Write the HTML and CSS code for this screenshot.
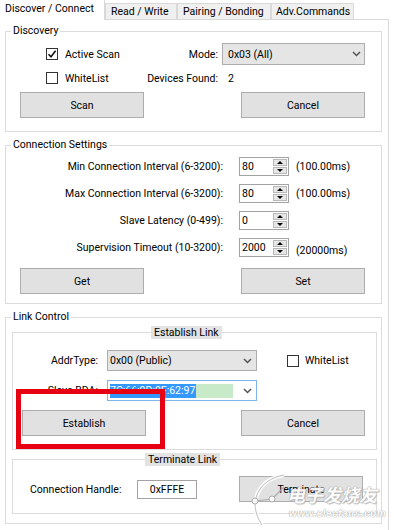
FILE: index.html
```html
<!DOCTYPE html>
<html>
<head>
<meta charset="utf-8">
<link rel="stylesheet" href="styles.css">
</head>
<body>
<div class="screen">
  <div class="tabs">
    <div class="tab tab-active">Discover / Connect</div>
    <div class="tab tab-rw">Read / Write</div>
    <div class="tab tab-pb">Pairing / Bonding</div>
    <div class="tab tab-adv">Adv.Commands</div>
  </div>
  <div class="page">
    <fieldset class="group">
      <legend class="group-title">Discovery</legend>
      <div class="disc-body">
        <div class="disc-grid">
          <div class="check check-disc"><span class="box"><svg width="10" height="10" viewBox="0 0 10 10"><path d="M1.5 5.2 L4 7.8 L8.6 1.8" fill="none" stroke="#111" stroke-width="1.6"/></svg></span><span>Active Scan</span></div>
          <div class="lbl-right">Mode:</div>
          <div class="combo combo-disc"><span>0x03 (All)</span><svg class="chev" width="9" height="6" viewBox="0 0 9 6"><path d="M1 1 L4.5 4.5 L8 1" fill="none" stroke="#555" stroke-width="1.5"/></svg></div>
          <div class="check check-disc"><span class="box"></span><span>WhiteList</span></div>
          <div class="lbl-right">Devices Found:</div>
          <div class="val">2</div>
        </div>
        <div class="btn-row">
          <button class="btn">Scan</button>
          <button class="btn">Cancel</button>
        </div>
      </div>
    </fieldset>

    <fieldset class="group group-gap">
      <legend class="group-title">Connection Settings</legend>
      <div class="conn-body">
        <div class="conn-grid">
          <div class="conn-lbl">Min Connection Interval (6-3200):</div>
          <div class="spin"><span class="spin-val">80</span><span class="spin-btns"><span class="spin-btn"><i class="tri-up"></i></span><span class="spin-btn"><i class="tri-down"></i></span></span></div>
          <div class="conn-note">(100.00ms)</div>

          <div class="conn-lbl">Max Connection Interval (6-3200):</div>
          <div class="spin"><span class="spin-val">80</span><span class="spin-btns"><span class="spin-btn"><i class="tri-up"></i></span><span class="spin-btn"><i class="tri-down"></i></span></span></div>
          <div class="conn-note">(100.00ms)</div>

          <div class="conn-lbl">Slave Latency (0-499):</div>
          <div class="spin"><span class="spin-val">0</span><span class="spin-btns"><span class="spin-btn"><i class="tri-up"></i></span><span class="spin-btn"><i class="tri-down"></i></span></span></div>
          <div class="conn-note"></div>

          <div class="conn-lbl">Supervision Timeout (10-3200):</div>
          <div class="spin"><span class="spin-val">2000</span><span class="spin-btns"><span class="spin-btn"><i class="tri-up"></i></span><span class="spin-btn"><i class="tri-down"></i></span></span></div>
          <div class="conn-note conn-note-low">(20000ms)</div>
        </div>
        <div class="btn-row btn-row-conn">
          <button class="btn">Get</button>
          <button class="btn">Set</button>
        </div>
      </div>
    </fieldset>

    <fieldset class="group group-gap">
      <legend class="group-title">Link Control</legend>
      <div class="link-body">
        <fieldset class="sub sub-est">
          <legend class="sub-title sub-title-est">Establish Link</legend>
          <div class="est-body">
            <div class="est-grid">
              <div class="lbl-right">AddrType:</div>
              <div class="combo combo-link"><span>0x00 (Public)</span><svg class="chev" width="9" height="6" viewBox="0 0 9 6"><path d="M1 1 L4.5 4.5 L8 1" fill="none" stroke="#555" stroke-width="1.5"/></svg></div>
              <div class="check check-link"><span class="box"></span><span>WhiteList</span></div>

              <div class="lbl-right">Slave BDA:</div>
              <div class="combo combo-edit"><span class="sel">7C:66:9D:9F:62:97</span><span class="green"></span><svg class="chev" width="9" height="6" viewBox="0 0 9 6"><path d="M1 1 L4.5 4.5 L8 1" fill="none" stroke="#555" stroke-width="1.5"/></svg></div>
              <div></div>
            </div>
            <div class="btn-row btn-row-est">
              <button class="btn">Establish</button>
              <button class="btn">Cancel</button>
            </div>
          </div>
        </fieldset>
        <fieldset class="sub sub-term">
          <legend class="sub-title sub-title-term">Terminate Link</legend>
          <div class="term-body">
            <div class="term-lbl">Connection Handle:</div>
            <div class="handle">0xFFFE</div>
            <button class="btn btn-term">Terminate</button>
          </div>
        </fieldset>
      </div>
    </fieldset>
  </div>

  <div class="annot"></div>

  <div class="watermark">
    <svg class="wm-logo" width="50" height="56" viewBox="0 0 50 56">
      <path d="M40 2 C16 6 2 28 18 52" fill="none" stroke="#fff" stroke-width="4"/>
      <path d="M40 2 C16 6 2 28 18 52" fill="none" stroke="#a8a8a8" stroke-width="0.8"/>
      <line x1="11" y1="28" x2="28" y2="26" stroke="#a8a8a8" stroke-width="1.2"/>
      <circle cx="11" cy="28" r="3" fill="#fff" stroke="#a8a8a8" stroke-width="1"/>
      <circle cx="28" cy="26" r="3" fill="#fff" stroke="#a8a8a8" stroke-width="1"/>
      <line x1="30" y1="24" x2="40" y2="14" stroke="#a8a8a8" stroke-width="1.2"/>
    </svg>
    <div class="wm-text">
      <div class="wm-cn">电子发烧友</div>
      <div class="wm-url">www.elecfans.com</div>
    </div>
  </div>
</div>
</body>
</html>
```

FILE: styles.css
```css
* { box-sizing: border-box; }

html, body {
  margin: 0;
  padding: 0;
  background: #ffffff;
}

body {
  font-family: Roboto, "Liberation Sans", Arial, sans-serif;
  font-size: 10.5px;
  color: #000;
}

.screen {
  position: relative;
  width: 394px;
  height: 530px;
  overflow: hidden;
  background: #fff;
}

/* ---------- tabs ---------- */
.tabs {
  display: flex;
  align-items: flex-end;
  height: 19px;
}

.tab {
  height: 16px;
  line-height: 15px;
  padding-left: 5px;
  background: #f0f0f0;
  border: 1px solid #d9d9d9;
  border-bottom: none;
  white-space: nowrap;
  overflow: hidden;
}

.tab-active {
  position: relative;
  z-index: 2;
  width: 105px;
  height: 20px;
  margin-bottom: -1px;
  line-height: 17px;
  background: #fff;
  border-top: none;
  border-left: none;
  border-right: 1px solid #d9d9d9;
}

.tab-rw { width: 72px; }
.tab-pb { width: 94px; }
.tab-adv { width: 83px; padding-left: 4px; }

/* ---------- page ---------- */
.page {
  width: 389px;
  height: 511px;
  border-top: 1px solid #d9d9d9;
  border-right: 1px solid #d9d9d9;
  padding: 4px 6px 0 5px;
  background: #fff;
}

.group {
  margin: 0;
  padding: 0;
  min-width: 0;
  border: 1px solid #dcdcdc;
}

.group-gap { margin-top: 6px; }

.group-title {
  margin-left: 5px;
  padding: 0 2px;
  line-height: 14px;
  height: 14px;
}

/* ---------- common controls ---------- */
.btn-row {
  display: flex;
  justify-content: space-between;
}

.btn {
  width: 124px;
  height: 26px;
  padding: 0;
  margin: 0;
  font-family: inherit;
  font-size: 10.5px;
  color: #000;
  background: #e1e1e1;
  border: 1px solid #adadad;
  border-radius: 0;
}

.check {
  display: flex;
  align-items: center;
  gap: 7px;
}

.box {
  width: 12px;
  height: 12px;
  border: 1px solid #333;
  background: #fff;
  display: flex;
  align-items: center;
  justify-content: center;
  flex: none;
}

.lbl-right {
  text-align: right;
  white-space: nowrap;
}

.combo {
  display: flex;
  align-items: center;
  white-space: nowrap;
}

.chev { margin-left: auto; flex: none; }

/* ---------- discovery ---------- */
.disc-body {
  padding: 5px 16px 13px 14px;
}

.disc-grid {
  display: grid;
  grid-template-columns: 124px 78px 143px;
  grid-template-rows: 22px 12px;
  row-gap: 7px;
  align-items: center;
  margin-bottom: 8px;
}

.check-disc { padding-left: 26px; }

.disc-grid .lbl-right { padding-right: 4px; }

.combo-disc {
  height: 22px;
  padding: 0 3px 0 5px;
  background: #e5e5e5;
  border: 1px solid #adadad;
}

.val { padding-left: 6px; }

/* ---------- connection settings ---------- */
.conn-body {
  padding: 5px 16px 9px 14px;
}

.conn-grid {
  display: grid;
  grid-template-columns: 212px 50px auto;
  grid-auto-rows: 19px;
  column-gap: 7px;
  row-gap: 8px;
  align-items: center;
  margin-bottom: 11px;
}

.conn-lbl {
  text-align: right;
  padding-right: 9px;
  white-space: nowrap;
}

.conn-note { white-space: nowrap; }
.conn-note-low { padding-top: 5px; }

.spin {
  display: flex;
  height: 19px;
  border: 1px solid #a3a3a3;
  background: #fff;
}

.spin-val {
  flex: 1;
  line-height: 17px;
  padding-left: 2px;
}

.spin-btns {
  width: 16px;
  display: flex;
  flex-direction: column;
  gap: 1px;
  padding: 1px;
}

.spin-btn {
  flex: 1;
  display: flex;
  align-items: center;
  justify-content: center;
  background: #e6e6e6;
  border: 1px solid #b8b8b8;
}

.tri-up, .tri-down {
  width: 0;
  height: 0;
  border-left: 3px solid transparent;
  border-right: 3px solid transparent;
}

.tri-up { border-bottom: 3px solid #000; }
.tri-down { border-top: 3px solid #000; }

/* ---------- link control ---------- */
.link-body {
  padding: 2px 4px 9px 6px;
}

.sub {
  margin: 0;
  padding: 0;
  min-width: 0;
  border: 1px solid #dcdcdc;
}

.sub-term { margin-top: 3px; }

.sub-title {
  padding: 0 3px;
  line-height: 13px;
  height: 13px;
  background: #e3e3e3;
}

.sub-title-est { margin-left: 138px; }
.sub-title-term { margin-left: 132px; }

.est-body {
  padding: 11px 11px 13px 0;
}

.est-grid {
  display: grid;
  grid-template-columns: 85px 150px auto;
  grid-template-rows: 21px 21px;
  column-gap: 9px;
  row-gap: 9px;
  align-items: center;
  margin-bottom: 9px;
}

.combo-link {
  height: 21px;
  padding: 0 4px 0 2px;
  background: #e5e5e5;
  border: 1px solid #adadad;
}

.combo-edit {
  height: 21px;
  padding: 0 4px 0 2px;
  background: #fff;
  border: 1px solid #7eb4ea;
}

.sel {
  background: #3399ff;
  color: #fff;
  line-height: 14px;
  padding: 0 1px 0 0;
}

.green {
  width: 37px;
  height: 14px;
  background: #c9eac9;
}

.check-link { padding-left: 21px; gap: 6px; }

.btn-row-est { padding-left: 9px; }

.term-body {
  display: flex;
  align-items: center;
  padding: 10px 13px 11px 17px;
}

.term-lbl {
  width: 107px;
  white-space: nowrap;
}

.handle {
  width: 60px;
  height: 19px;
  line-height: 17px;
  text-align: center;
  border: 1px solid #a3a3a3;
  background: #fff;
}

.btn-term { margin-left: auto; }

/* ---------- overlays ---------- */
.annot {
  position: absolute;
  left: 16px;
  top: 389px;
  width: 149px;
  height: 60px;
  border: 5px solid #e60012;
}

.watermark {
  position: absolute;
  left: 244px;
  top: 473px;
  display: flex;
  align-items: flex-start;
  pointer-events: none;
  opacity: 0.9;
}

.wm-logo { flex: none; }

.wm-text {
  margin-left: -7px;
  padding-top: 10px;
}

.wm-cn {
  font-family: "Noto Sans CJK SC", sans-serif;
  font-size: 18px;
  line-height: 22px;
  font-style: italic;
  font-weight: bold;
  color: #fff;
  text-shadow: 0 0 1px #9a9a9a, 0 0 1px #9a9a9a, 1px 1px 1px #bbbbbb;
}

.wm-url {
  font-family: "Liberation Sans", Arial, sans-serif;
  font-size: 10px;
  line-height: 12px;
  font-style: italic;
  font-weight: bold;
  color: #fff;
  letter-spacing: 0.5px;
  margin-top: 3px;
  margin-left: 2px;
  text-shadow: 0 0 1px #9a9a9a, 0 0 1px #9a9a9a;
}
```
